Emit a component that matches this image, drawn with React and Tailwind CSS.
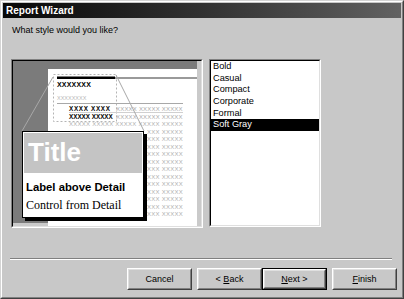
import React from "react";

const items = ["Bold", "Casual", "Compact", "Corporate", "Formal", "Soft Gray"];

function Btn({ children, def }) {
  const inner = (
    <div className="h-full w-full border border-t-white border-l-white border-r-[#404040] border-b-[#404040] bg-[#c8c8c8]">
      <div className="flex h-full w-full items-center justify-center whitespace-pre border border-t-[#dfdfdf] border-l-[#dfdfdf] border-r-[#808080] border-b-[#808080] text-[9px] leading-none text-black">
        {children}
      </div>
    </div>
  );
  if (def) {
    return <div className="h-[22px] w-[65px] border border-black">{inner}</div>;
  }
  return <div className="h-[22px] w-[65px]">{inner}</div>;
}

const FF = "Liberation Sans, Arial, sans-serif";

function Preview() {
  const rows = Array.from({ length: 13 }, (_, k) => 65 + 7.5 * k);
  return (
    <div className="h-[169px] w-[192px] border border-t-[#808080] border-l-[#808080] border-r-white border-b-white">
      <div className="relative h-full w-full overflow-hidden border border-t-black border-l-black border-r-[#dfdfdf] border-b-[#dfdfdf] bg-[#cacaca]">
        <svg width="188" height="165" viewBox="0 0 188 165" className="block">
          <rect x="0" y="0" width="184" height="162" fill="#7b7b7b" />
          <rect x="35" y="8" width="149" height="157" fill="#ffffff" />
          <rect x="102" y="16" width="82" height="2" fill="#9a9a9a" />
          <rect x="44" y="15.5" width="58" height="2.5" fill="#000" />
          <rect x="40.5" y="13.5" width="63" height="47" fill="none" stroke="#b4b4b4" strokeDasharray="2 2" />
          <text x="44" y="25.5" fontSize="7" fontWeight="bold" fontFamily={FF} fill="#000" letterSpacing="0.2">XXXXXXX</text>
          <text x="44" y="39" fontSize="5.5" fontFamily={FF} fill="#b8b8b8">XXXXXXXX</text>
          <line x1="44" x2="170" y1="42.5" y2="42.5" stroke="#a8a8a8" />
          <text x="56" y="49.5" fontSize="6.3" fontWeight="bold" fontFamily={FF} fill="#000" letterSpacing="0.7">XXXX XXXX</text>
          <text x="103" y="49.5" fontSize="6" fontFamily={FF} fill="#aaaaaa" letterSpacing="0.2">XXXXX XXXXX XXXXX</text>
          <line x1="56" x2="170" y1="51.5" y2="51.5" stroke="#d0d0d0" />
          <text x="56" y="58.3" fontSize="6.3" fontWeight="bold" fontFamily={FF} fill="#000">XXXXX XXXXX</text>
          <text x="103" y="58.3" fontSize="6" fontFamily={FF} fill="#aaaaaa" letterSpacing="0.2">XXXXX XXXXX XXXXX</text>
          {rows.map((y, i) =>
            y < 68 ? (
              <text key={i} x="56" y={y} fontSize="6" fontFamily={FF} fill="#b0b0b0" letterSpacing="0.25">XXXXX XXXXX XXXXX XXXXX XXXXX</text>
            ) : (
              <text key={i} x="170" y={y} textAnchor="end" fontSize="6" fontFamily={FF} fill="#b0b0b0" letterSpacing="0.25">XXX XXXXX</text>
            )
          )}
          <line x1="40" y1="16" x2="9" y2="70" stroke="#a8a8a8" />
          <line x1="103" y1="14" x2="131" y2="70" stroke="#a8a8a8" />
        </svg>
        <div className="absolute left-[9px] top-[70px] h-[87px] w-[122px] border border-black bg-white p-[1px] shadow-[3px_3px_0_#000]">
          <div className="h-[40px] bg-[#c4c4c4] pl-[4px] pt-[6px]">
            <div className="font-['Liberation_Sans',Arial,sans-serif] text-[26px] font-bold leading-[26px] text-white">Title</div>
          </div>
          <div className="pl-[2px]">
            <div className="mt-[7px] font-['Liberation_Sans',Arial,sans-serif] text-[11.3px] font-bold leading-[14px] text-black">Label above Detail</div>
            <div className="mt-[4px] font-['Liberation_Serif','Times_New_Roman',serif] text-[12px] leading-[14px] text-black">Control from Detail</div>
          </div>
        </div>
      </div>
    </div>
  );
}

function ListBox() {
  return (
    <div className="h-[168px] w-[112px] border border-t-[#808080] border-l-[#808080] border-r-white border-b-white">
      <div className="h-full w-full border border-t-black border-l-black border-r-[#dfdfdf] border-b-[#dfdfdf] bg-white">
        {items.map((it) => (
          <div
            key={it}
            className={
              it === "Soft Gray"
                ? "flex h-[11.6px] items-center bg-black pl-[2px] text-[9.2px] leading-none text-white"
                : "flex h-[11.6px] items-center pl-[2px] text-[9.2px] leading-none text-black"
            }
          >
            {it}
          </div>
        ))}
      </div>
    </div>
  );
}

export default function App() {
  return (
    <div className="h-[299px] w-[404px] border border-t-[#d4d4d4] border-l-[#d4d4d4] border-r-[#404040] border-b-[#404040] bg-[#c8c8c8] font-['Liberation_Sans',Arial,sans-serif]">
      <div className="flex h-full w-full flex-col border border-t-white border-l-white border-r-[#808080] border-b-[#808080] p-[1px]">
        <div className="flex h-[15px] items-center bg-linear-to-r from-[#080808] to-[#626262] pl-[3px]">
          <span className="text-[10px] font-bold leading-none text-white">Report Wizard</span>
        </div>
        <div className="mt-[7px] pl-[9px] text-[9px] leading-[11px] text-black">What style would you like?</div>
        <div className="mt-[23px] flex gap-[6px] pl-[8px]">
          <Preview />
          <ListBox />
        </div>
        <div className="ml-[7px] mt-[30px] w-[382px] border-t border-b border-t-[#808080] border-b-white" />
        <div className="mt-[8px] flex justify-end pr-[4px]">
          <Btn>Cancel</Btn>
          <div className="ml-[5px]">
            <Btn>
              {"< "}
              <span className="underline">B</span>
              {"ack"}
            </Btn>
          </div>
          <Btn def>
            <span className="underline">N</span>
            {"ext >"}
          </Btn>
          <div className="ml-[5px]">
            <Btn>
              <span className="underline">F</span>
              {"inish"}
            </Btn>
          </div>
        </div>
      </div>
    </div>
  );
}
